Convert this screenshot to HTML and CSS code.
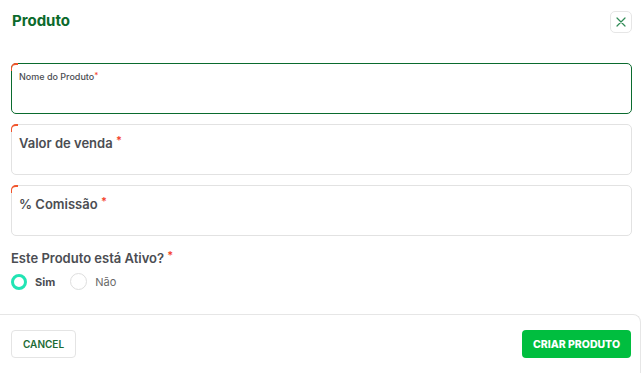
FILE: index.html
```html
<!DOCTYPE html>
<html lang="pt">
<head>
    <meta charset="UTF-8">
    <meta name="viewport" content="width=device-width, initial-scale=1.0">
    <title>Produto</title>
    <link rel="stylesheet" href="styles.css">
</head>
<body>
    <div class="modal">
        <div class="modal-header">
            <h2>Produto</h2>
            <button class="close-btn" aria-label="Fechar">
                <svg width="10" height="10" viewBox="0 0 10 10">
                    <path d="M1 1 L9 9 M9 1 L1 9" stroke="#2f8a55" stroke-width="1.2" stroke-linecap="round"/>
                </svg>
            </button>
        </div>

        <div class="modal-body">
            <div class="field focused">
                <label>Nome do Produto<span class="req">*</span></label>
            </div>
            <div class="field">
                <label>Valor de venda <span class="req">*</span></label>
            </div>
            <div class="field">
                <label>% Comissão <span class="req">*</span></label>
            </div>

            <p class="question">Este Produto está Ativo? <span class="req">*</span></p>
            <div class="radios">
                <label class="radio checked"><span class="circle"></span>Sim</label>
                <label class="radio"><span class="circle"></span>Não</label>
            </div>
        </div>

        <div class="modal-footer">
            <button class="btn-cancel">CANCEL</button>
            <button class="btn-primary">CRIAR PRODUTO</button>
        </div>
    </div>
</body>
</html>
```

FILE: styles.css
```css
* {
    box-sizing: border-box;
    margin: 0;
    padding: 0;
}

body {
    font-family: 'Inter', 'Open Sans', sans-serif;
    background: white;
    color: #4b4b4b;
}

.modal {
    width: 644px;
    height: 373px;
    background: white;
    display: flex;
    flex-direction: column;
}

.modal-header {
    display: flex;
    justify-content: space-between;
    align-items: center;
    padding: 11px 12px 0 12px;
    height: 33px;
}

.modal-header h2 {
    font-size: 15px;
    font-weight: 700;
    color: #0c6a2c;
    margin-top: -4px;
}

.close-btn {
    width: 22px;
    height: 22px;
    border: 1px solid #e6e6e6;
    border-radius: 5px;
    background: white;
    display: flex;
    align-items: center;
    justify-content: center;
}

.modal-body {
    padding: 30px 12px 0 11px;
    flex: 1;
}

.field {
    position: relative;
    height: 51px;
    border: 1px solid #e2e2e2;
    border-radius: 5px;
    margin-bottom: 10px;
    padding: 10px 7px;
}

.field::before {
    content: "";
    position: absolute;
    top: -1px;
    left: -1px;
    width: 6px;
    height: 6px;
    border-top: 2px solid #f2552c;
    border-left: 1px solid #f2552c;
    border-top-left-radius: 5px;
}

.field label {
    display: block;
    line-height: 16px;
    font-size: 13px;
    font-weight: 600;
    color: #4b4d52;
}

.field.focused {
    border-color: #0a6b2e;
    padding-top: 7px;
}

.field.focused label {
    font-size: 9px;
    line-height: 12px;
    font-weight: 500;
}

.req {
    color: #f4442e;
    vertical-align: top;
    font-size: 11px;
    line-height: 1;
}

.field.focused .req {
    font-size: 8px;
}

.question {
    margin-top: 14px;
    font-size: 13px;
    font-weight: 600;
    color: #4b4d52;
}

.radios {
    display: flex;
    align-items: center;
    gap: 15px;
    margin-top: 7px;
}

.radio {
    display: flex;
    align-items: center;
    gap: 8px;
    font-size: 11px;
    color: #6a6a6a;
}

.circle {
    width: 17px;
    height: 17px;
    border: 1px solid #dedede;
    border-radius: 50%;
    background: white;
}

.radio.checked {
    font-weight: 700;
    color: #4b4d52;
}

.radio.checked .circle {
    width: 16px;
    height: 16px;
    border: 3px solid #22e4b4;
}

.modal-footer {
    display: flex;
    justify-content: space-between;
    align-items: center;
    border-top: 1px solid #e6e6e6;
    border-right: 1px solid #e6e6e6;
    border-top-right-radius: 8px;
    padding: 15px 12px 15px 11px;
    margin-right: 3px;
}

.btn-cancel {
    height: 28px;
    padding: 0 11px;
    border: 1px solid #e4e4e4;
    border-radius: 4px;
    background: white;
    color: #1c6b35;
    font-family: inherit;
    font-size: 10px;
    font-weight: 600;
}

.btn-primary {
    height: 28px;
    padding: 0 11px;
    border: none;
    border-radius: 4px;
    background: #00be3f;
    color: white;
    font-family: inherit;
    font-size: 10.5px;
    font-weight: 800;
    margin-right: -3px;
}
```
